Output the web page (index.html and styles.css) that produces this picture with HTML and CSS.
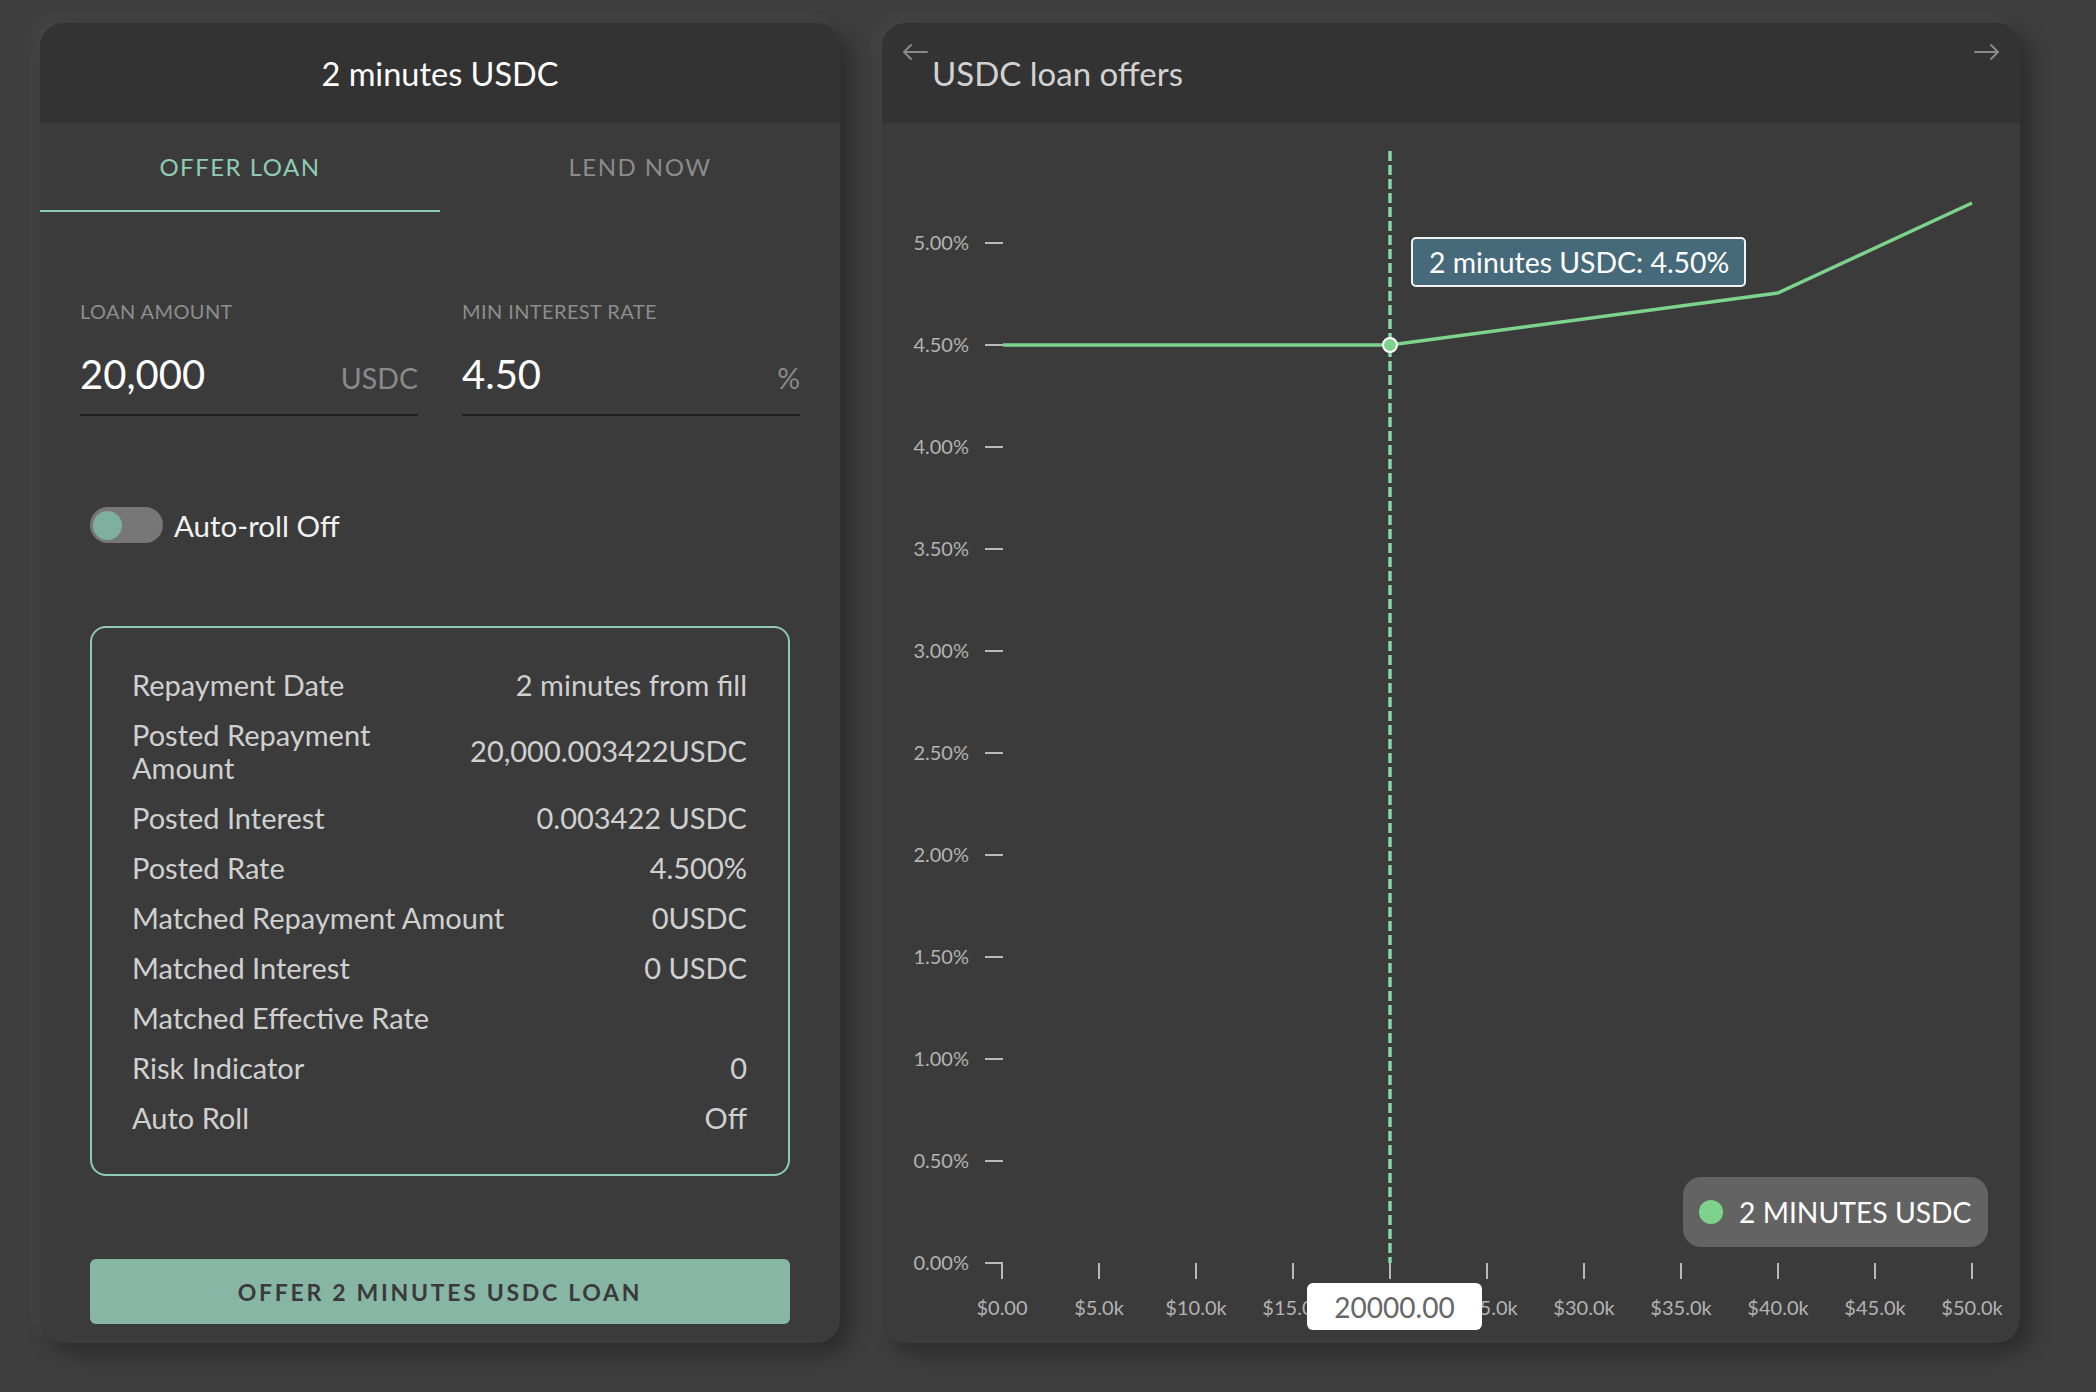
FILE: index.html
```html
<!DOCTYPE html>
<html lang="en">
<head>
<meta charset="utf-8">
<title>2 minutes USDC</title>
<link rel="stylesheet" href="styles.css">
</head>
<body>
<div class="page">
  <section class="card card-form">
    <header class="card-head">
      <h1 class="title">2 minutes USDC</h1>
    </header>
    <nav class="tabs">
      <div class="tab active">OFFER LOAN</div>
      <div class="tab">LEND NOW</div>
    </nav>
    <div class="form">
      <div class="fields">
        <div class="field">
          <span class="field-label">LOAN AMOUNT</span>
          <div class="input"><span class="val">20,000</span><span class="unit">USDC</span></div>
        </div>
        <div class="field">
          <span class="field-label">MIN INTEREST RATE</span>
          <div class="input"><span class="val">4.50</span><span class="unit">%</span></div>
        </div>
      </div>
      <div class="toggle-row">
        <span class="switch"><span class="knob"></span></span>
        <span class="toggle-label">Auto-roll Off</span>
      </div>
      <div class="summary">
        <div class="row"><span class="k">Repayment Date</span><span class="v">2 minutes from fill</span></div>
        <div class="row"><span class="k">Posted Repayment Amount</span><span class="v">20,000.003422USDC</span></div>
        <div class="row"><span class="k">Posted Interest</span><span class="v">0.003422 USDC</span></div>
        <div class="row"><span class="k">Posted Rate</span><span class="v">4.500%</span></div>
        <div class="row"><span class="k">Matched Repayment Amount</span><span class="v">0USDC</span></div>
        <div class="row"><span class="k">Matched Interest</span><span class="v">0 USDC</span></div>
        <div class="row"><span class="k">Matched Effective Rate</span><span class="v"></span></div>
        <div class="row"><span class="k">Risk Indicator</span><span class="v">0</span></div>
        <div class="row"><span class="k">Auto Roll</span><span class="v">Off</span></div>
      </div>
      <button class="cta">OFFER 2 MINUTES USDC LOAN</button>
    </div>
  </section>

  <section class="card card-chart">
    <header class="chart-head">
      <svg class="nav-arrow" viewBox="0 0 26 18"><path d="M25 9H2M9 2L2 9l7 7" fill="none" stroke="#8a8a8a" stroke-width="2" stroke-linecap="round" stroke-linejoin="round"/></svg>
      <h2 class="chart-title">USDC loan offers</h2>
      <svg class="nav-arrow" viewBox="0 0 26 18"><path d="M1 9h23M17 2l7 7-7 7" fill="none" stroke="#8a8a8a" stroke-width="2" stroke-linecap="round" stroke-linejoin="round"/></svg>
    </header>
    <div class="chart-body">
      <svg class="plot" width="1138" height="1220" viewBox="0 0 1138 1220">
        <g class="ylabels" font-size="20" fill="#b3b3b3" text-anchor="end">
          <text x="87" y="127">5.00%</text>
          <text x="87" y="229">4.50%</text>
          <text x="87" y="331">4.00%</text>
          <text x="87" y="433">3.50%</text>
          <text x="87" y="535">3.00%</text>
          <text x="87" y="637">2.50%</text>
          <text x="87" y="739">2.00%</text>
          <text x="87" y="841">1.50%</text>
          <text x="87" y="943">1.00%</text>
          <text x="87" y="1045">0.50%</text>
          <text x="87" y="1147">0.00%</text>
        </g>
        <g stroke="#b8b8b8" stroke-width="2">
          <line x1="103" y1="120" x2="121" y2="120"/>
          <line x1="103" y1="222" x2="121" y2="222"/>
          <line x1="103" y1="324" x2="121" y2="324"/>
          <line x1="103" y1="426" x2="121" y2="426"/>
          <line x1="103" y1="528" x2="121" y2="528"/>
          <line x1="103" y1="630" x2="121" y2="630"/>
          <line x1="103" y1="732" x2="121" y2="732"/>
          <line x1="103" y1="834" x2="121" y2="834"/>
          <line x1="103" y1="936" x2="121" y2="936"/>
          <line x1="103" y1="1038" x2="121" y2="1038"/>
          <line x1="103" y1="1140" x2="121" y2="1140"/>
          <line x1="120" y1="1139" x2="120" y2="1156"/>
          <line x1="217" y1="1140" x2="217" y2="1156"/>
          <line x1="314" y1="1140" x2="314" y2="1156"/>
          <line x1="411" y1="1140" x2="411" y2="1156"/>
          <line x1="508" y1="1140" x2="508" y2="1156"/>
          <line x1="605" y1="1140" x2="605" y2="1156"/>
          <line x1="702" y1="1140" x2="702" y2="1156"/>
          <line x1="799" y1="1140" x2="799" y2="1156"/>
          <line x1="896" y1="1140" x2="896" y2="1156"/>
          <line x1="993" y1="1140" x2="993" y2="1156"/>
          <line x1="1090" y1="1140" x2="1090" y2="1156"/>
        </g>
        <g class="xlabels" font-size="20" fill="#b3b3b3" text-anchor="middle">
          <text x="120" y="1192">$0.00</text>
          <text x="217" y="1192">$5.0k</text>
          <text x="314" y="1192">$10.0k</text>
          <text x="411" y="1192">$15.0k</text>
          <text x="605" y="1192">$25.0k</text>
          <text x="702" y="1192">$30.0k</text>
          <text x="799" y="1192">$35.0k</text>
          <text x="896" y="1192">$40.0k</text>
          <text x="993" y="1192">$45.0k</text>
          <text x="1090" y="1192">$50.0k</text>
        </g>
        <line x1="508" y1="28" x2="508" y2="1140" stroke="#84d8a6" stroke-width="3.5" stroke-dasharray="10 4"/>
        <polyline points="121,222 508,222 896,170 1090,80" fill="none" stroke="#7ed38c" stroke-width="3.5" stroke-linejoin="round"/>
        <circle cx="508" cy="222" r="7" fill="#7ed38c" stroke="#ffffff" stroke-width="2"/>
      </svg>
      <div class="tooltip">2 minutes USDC: 4.50%</div>
      <div class="legend"><span class="dot"></span><span>2 MINUTES USDC</span></div>
      <div class="x-bubble">20000.00</div>
    </div>
  </section>
</div>
</body>
</html>
```

FILE: styles.css
```css
* { box-sizing: border-box; }

body {
  margin: 0;
  width: 2096px;
  height: 1392px;
  overflow: hidden;
  background: #3e3e3e;
  font-family: Lato, "Open Sans", "Liberation Sans", sans-serif;
}

.page {
  display: flex;
  align-items: flex-start;
  gap: 42px;
  padding: 23px 0 0 40px;
}

.card {
  height: 1320px;
  background: #3b3b3b;
  border-radius: 24px;
  overflow: hidden;
  display: flex;
  flex-direction: column;
  box-shadow: -6px -6px 16px rgba(255, 255, 255, 0.045), 10px 10px 22px rgba(0, 0, 0, 0.32);
}

.card-form { width: 800px; }
.card-chart { width: 1138px; }

.card-head {
  height: 100px;
  flex-shrink: 0;
  background: #333333;
  display: flex;
  align-items: center;
  justify-content: center;
}

.title {
  margin: 0;
  font-size: 32.5px;
  font-weight: 400;
  color: #ffffff;
}

.tabs {
  display: grid;
  grid-template-columns: 1fr 1fr;
}

.tab {
  height: 89px;
  display: flex;
  align-items: center;
  justify-content: center;
  font-size: 24px;
  letter-spacing: 1.5px;
  color: #8b8b8b;
  border-bottom: 2px solid transparent;
}

.tab.active {
  color: #8fcbb5;
  border-bottom-color: #8fcbb5;
}

.form {
  padding: 0 40px;
  display: flex;
  flex-direction: column;
}

.fields {
  display: grid;
  grid-template-columns: 1fr 1fr;
  gap: 44px;
  margin-top: 88px;
}

.field-label {
  display: block;
  font-size: 20px;
  line-height: 23px;
  color: #8d8d8d;
  letter-spacing: 0.4px;
}

.input {
  margin-top: 28px;
  display: flex;
  justify-content: space-between;
  align-items: baseline;
  padding-bottom: 17px;
  border-bottom: 2px solid #1f1f1f;
}

.val {
  font-size: 40px;
  line-height: 46px;
  color: #ffffff;
}

.unit {
  font-size: 28.5px;
  color: #8a8a8a;
}

.toggle-row {
  margin-top: 91px;
  padding-left: 10px;
  display: flex;
  align-items: center;
  gap: 11px;
}

.switch {
  width: 73px;
  height: 36px;
  border-radius: 18px;
  background: #777777;
  display: flex;
  align-items: center;
  padding-left: 3px;
}

.knob {
  width: 29px;
  height: 29px;
  border-radius: 50%;
  background: #7fb09f;
}

.toggle-label {
  font-size: 29.5px;
  color: #f2f2f2;
}

.summary {
  margin: 83px 10px 0;
  border: 2px solid #8fcbb5;
  border-radius: 16px;
  padding: 31px 41px 32px 40px;
  color: #d0d0d0;
  font-size: 29px;
}

.row {
  display: flex;
  justify-content: space-between;
  align-items: center;
  gap: 24px;
  padding: 8.5px 0;
  line-height: 33px;
}

.row .v {
  flex-shrink: 0;
  white-space: nowrap;
  text-align: right;
}

.cta {
  margin: 83px 10px 0;
  height: 65px;
  border: none;
  border-radius: 6px;
  background: #87b6a5;
  color: #3a3a3a;
  font-family: inherit;
  font-size: 23px;
  font-weight: 700;
  letter-spacing: 2.7px;
}

/* chart card */
.chart-head {
  height: 100px;
  flex-shrink: 0;
  background: #333333;
  display: flex;
  align-items: flex-start;
  padding: 20px 20px 0 20px;
}

.nav-arrow {
  width: 26px;
  height: 18px;
  flex-shrink: 0;
}

.chart-title {
  flex: 1;
  margin: 11px 0 0 4px;
  font-size: 33px;
  line-height: 38px;
  font-weight: 400;
  color: #d2d2d2;
}

.chart-body {
  position: relative;
  flex: 1;
}

.plot {
  display: block;
  font-family: Lato, "Open Sans", sans-serif;
}

.tooltip {
  position: absolute;
  left: 529px;
  top: 114px;
  width: 335px;
  height: 50px;
  padding-left: 16px;
  display: flex;
  align-items: center;
  background: #476a7a;
  border: 2px solid #f2f2f2;
  border-radius: 5px;
  color: #ffffff;
  font-size: 28.4px;
}

.legend {
  position: absolute;
  left: 801px;
  top: 1054px;
  width: 305px;
  height: 70px;
  padding-left: 16px;
  display: flex;
  align-items: center;
  gap: 16px;
  background: #636363;
  border-radius: 18px;
  color: #ffffff;
  font-size: 28.3px;
}

.dot {
  width: 24px;
  height: 24px;
  border-radius: 50%;
  background: #7ed38c;
}

.x-bubble {
  position: absolute;
  left: 425px;
  top: 1160px;
  width: 175px;
  height: 47px;
  display: flex;
  align-items: center;
  justify-content: center;
  background: #ffffff;
  border-radius: 6px;
  color: #666666;
  font-size: 28px;
}
```
